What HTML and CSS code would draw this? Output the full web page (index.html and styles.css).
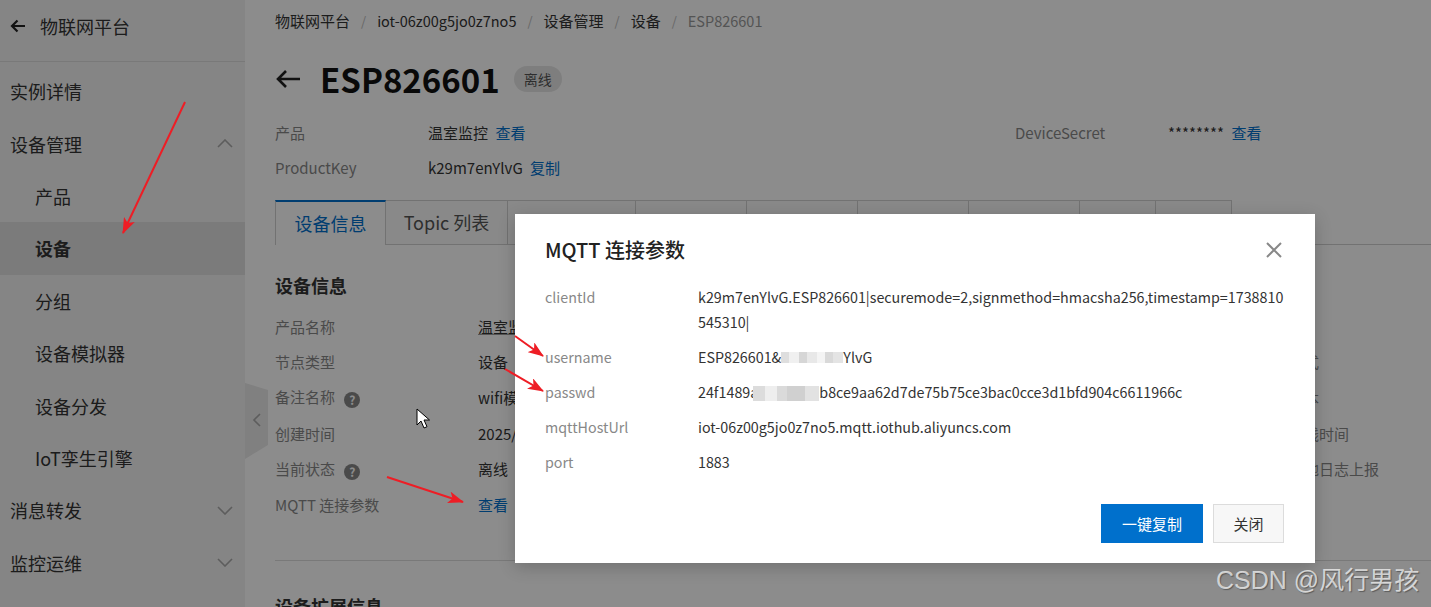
FILE: index.html
```html
<!DOCTYPE html>
<html>
<head>
    <meta charset="utf-8">
    <title>ESP826601 - 设备</title>
    <link rel="stylesheet" href="styles.css">
</head>
<body>
    <div class="page">
        <aside class="sidebar">
            <div class="side-head">
                <svg class="back-icon" width="16" height="14" viewBox="0 0 16 14"><path d="M15 7H2M7.5 1.5L2 7l5.5 5.5" fill="none" stroke="#222" stroke-width="2.2"/></svg>
                <span>物联网平台</span>
            </div>
            <ul class="menu">
                <li>实例详情</li>
                <li>设备管理 <svg class="chev" width="16" height="9" viewBox="0 0 16 9"><path d="M1 8l7-7 7 7" fill="none" stroke="#aaa" stroke-width="1.6"/></svg></li>
                <li class="sub">产品</li>
                <li class="sub active">设备</li>
                <li class="sub">分组</li>
                <li class="sub">设备模拟器</li>
                <li class="sub">设备分发</li>
                <li class="sub">IoT孪生引擎</li>
                <li>消息转发 <svg class="chev" width="16" height="9" viewBox="0 0 16 9"><path d="M1 1l7 7 7-7" fill="none" stroke="#aaa" stroke-width="1.6"/></svg></li>
                <li>监控运维 <svg class="chev" width="16" height="9" viewBox="0 0 16 9"><path d="M1 1l7 7 7-7" fill="none" stroke="#aaa" stroke-width="1.6"/></svg></li>
            </ul>
        </aside>

        <main class="main">
            <svg class="handle" width="26" height="82" viewBox="0 0 26 82"><polygon points="1,3 24,10 24,65 1,79" fill="#e9e9e9"/><path d="M16 34l-6 6 6 6" fill="none" stroke="#aaa" stroke-width="1.6"/></svg>

            <div class="crumbs">
                <span class="cn">物联网平台</span><i>/</i>
                <span>iot-06z00g5jo0z7no5</span><i>/</i>
                <span class="cn">设备管理</span><i>/</i>
                <span class="cn">设备</span><i>/</i>
                <span class="current">ESP826601</span>
            </div>

            <div class="title-row">
                <svg width="26" height="20" viewBox="0 0 26 20"><path d="M25 10H3M11 2L3 10l8 8" fill="none" stroke="#222" stroke-width="2.6"/></svg>
                <h1>ESP826601</h1>
                <span class="badge">离线</span>
            </div>

            <div class="meta">
                <span class="label">产品</span>
                <span class="value">温室监控 <a>查看</a></span>
                <span></span><span></span>
                <span class="label">DeviceSecret</span>
                <span class="value">******** <a>查看</a></span>
                <span class="label">ProductKey</span>
                <span class="value">k29m7enYlvG <a>复制</a></span>
            </div>

            <div class="tabs">
                <div class="tab active">设备信息</div>
                <div class="tab w122">Topic 列表</div>
                <div class="tab w128">物模型数据</div>
                <div class="tab">设备影子</div>
                <div class="tab">文件管理</div>
                <div class="tab">日志服务</div>
                <div class="tab">在线调试</div>
                <div class="tab w76">分组</div>
                <div class="tab w76">任务</div>
            </div>

            <h3 class="section-title">设备信息</h3>
            <div class="info">
                <span class="label">产品名称</span><span class="value"><u>温室监控</u></span>
                <span></span><span></span>
                <span class="label">IP地址</span><span></span>

                <span class="label">节点类型</span><span class="value">设备</span>
                <span></span><span></span>
                <span class="label">认证方式</span><span></span>

                <span class="label">备注名称 <b class="help">?</b></span><span class="value">wifi模块</span>
                <span></span><span></span>
                <span class="label">固件版本</span><span></span>

                <span class="label">创建时间</span><span class="value">2025/02/06 10:52:11</span>
                <span></span><span></span>
                <span class="label">最后上线时间</span><span></span>

                <span class="label">当前状态 <b class="help">?</b></span><span class="value">离线</span>
                <span></span><span></span>
                <span class="label">设备本地日志上报</span><span></span>

                <span class="label">MQTT 连接参数</span><span class="value"><a>查看</a></span>
            </div>

            <div class="divider"></div>
            <h3 class="section-title next">设备扩展信息</h3>
        </main>
    </div>

    <div class="mask"></div>

    <div class="dialog">
        <h2>MQTT 连接参数</h2>
        <svg class="close" width="16" height="16" viewBox="0 0 16 16"><path d="M1 1l14 14M15 1L1 15" stroke="#888" stroke-width="2"/></svg>
        <div class="params">
            <span class="key">clientId</span>
            <span class="val">k29m7enYlvG.ESP826601|securemode=2,signmethod=hmacsha256,timestamp=1738810<br>545310|</span>
            <span class="key">username</span>
            <span class="val">ESP826601&amp;<span class="mosaic user"></span>YlvG</span>
            <span class="key">passwd</span>
            <span class="val">24f1489a<span class="mosaic pass"></span>b8ce9aa62d7de75b75ce3bac0cce3d1bfd904c6611966c</span>
            <span class="key">mqttHostUrl</span>
            <span class="val">iot-06z00g5jo0z7no5.mqtt.iothub.aliyuncs.com</span>
            <span class="key">port</span>
            <span class="val">1883</span>
        </div>
        <div class="actions">
            <button class="btn primary">一键复制</button>
            <button class="btn">关闭</button>
        </div>
    </div>

    <!-- red annotation arrows drawn over the screenshot -->
    <svg class="marks" width="1431" height="607" viewBox="0 0 1431 607">
        <defs>
            <marker id="head" viewBox="0 0 16 12" refX="15" refY="6" markerWidth="16" markerHeight="12" markerUnits="userSpaceOnUse" orient="auto">
                <path d="M0 0L16 6 0 12 4 6z" fill="#ee1d25"/>
            </marker>
        </defs>
        <g stroke="#ee1d25" stroke-width="2" fill="none" marker-end="url(#head)">
            <line x1="185" y1="102" x2="123" y2="233"/>
            <line x1="515" y1="336" x2="543" y2="356"/>
            <line x1="505" y1="369" x2="543" y2="391"/>
            <line x1="387" y1="477" x2="463" y2="502"/>
        </g>
    </svg>

    <svg class="cursor" width="14" height="22" viewBox="0 0 14 22"><path d="M1 1v16l4-4 3 7 3-1.3-3-6.7h5.5z" fill="#fff" stroke="#000" stroke-width="1"/></svg>

    <div class="watermark">CSDN @风行男孩</div>
</body>
</html>
```

FILE: styles.css
```css
body {
    margin: 0;
    width: 1431px;
    height: 607px;
    overflow: hidden;
    position: relative;
    font-family: "Noto Sans CJK SC", sans-serif;
    color: #333;
    background-color: white;
}

a {
    color: #0070cc;
    cursor: pointer;
}

.page {
    display: flex;
    height: 607px;
}

/* left menu */
.sidebar {
    width: 245px;
    flex: none;
    background-color: #f2f2f2;
}

.side-head {
    height: 62px;
    box-sizing: border-box;
    display: flex;
    align-items: center;
    gap: 14px;
    padding: 0 0 10px 10px;
    font-size: 18px;
    border-bottom: 1px solid #dcdcdc;
}

.menu {
    list-style: none;
    margin: 0;
    padding: 3px 0 0;
}

.menu li {
    height: 52.4px;
    display: flex;
    align-items: center;
    justify-content: space-between;
    padding: 0 12px 0 10px;
    font-size: 18px;
    color: #333;
}

.menu li.sub {
    padding-left: 35px;
}

.menu li.active {
    background-color: #e0e0e0;
    font-weight: bold;
}

/* main area */
.main {
    flex: 1;
    min-width: 0;
    padding-left: 30px;
    position: relative;
}

.handle {
    position: absolute;
    left: -1px;
    top: 380px;
}

.crumbs {
    padding-top: 11px;
    line-height: 20px;
    font-size: 14.5px;
    display: flex;
    white-space: nowrap;
}

.crumbs .cn {
    font-size: 15px;
}

.crumbs i {
    font-style: normal;
    color: #bbb;
    margin: 0 11px;
    font-size: 13px;
}

.crumbs .current {
    color: #999;
}

.title-row {
    display: flex;
    align-items: center;
    height: 40px;
    margin-top: 28px;
}

.title-row h1 {
    margin: 0 14px 0 19px;
    font-size: 33px;
    line-height: 40px;
    font-weight: bold;
    color: #111;
}

.badge {
    height: 26px;
    line-height: 26px;
    padding: 0 10px;
    border-radius: 13px;
    background-color: #e6e6e6;
    font-size: 14px;
    color: #555;
}

.meta {
    display: grid;
    grid-template-columns: 153px 217px 153px 217px 153px 217px;
    grid-auto-rows: 35px;
    align-items: center;
    margin-top: 15.5px;
    font-size: 15px;
    white-space: nowrap;
}

.label {
    color: #888;
}

.meta a {
    margin-left: 4px;
}

.tabs {
    display: flex;
    margin-top: 15px;
    height: 44px;
    border-bottom: 1px solid #cfcfcf;
}

.tab {
    width: 111px;
    height: 44px;
    line-height: 43px;
    text-align: center;
    font-size: 18px;
    color: #555;
    background-color: #fafafa;
    border-top: 1px solid #cfcfcf;
    border-right: 1px solid #cfcfcf;
    box-sizing: border-box;
    white-space: nowrap;
}

.tab.w122 {
    width: 122px;
}

.tab.w128 {
    width: 128px;
}

.tab.w76 {
    width: 76px;
}

.tab.active {
    height: 45px;
    color: #0070cc;
    background-color: white;
    border-top: 2px solid #0070cc;
    border-left: 1px solid #cfcfcf;
}

.section-title {
    margin: 28px 0 0;
    font-size: 18px;
    line-height: 24px;
    font-weight: bold;
}

.section-title.next {
    margin-top: 33px;
}

.info {
    display: grid;
    grid-template-columns: 203px 289px 203px 289px 203px 289px;
    grid-auto-rows: 35.6px;
    align-items: center;
    margin-top: 12px;
    font-size: 15px;
    white-space: nowrap;
}

.info u {
    text-decoration-color: #999;
}

.help {
    display: inline-flex;
    width: 16px;
    height: 16px;
    border-radius: 50%;
    background-color: #888;
    color: white;
    font-size: 12px;
    line-height: 16px;
    align-items: center;
    justify-content: center;
    margin-left: 6px;
    vertical-align: -2px;
}

.divider {
    margin-top: 38.4px;
    border-top: 1px solid #dcdcdc;
}

/* overlay + dialog */
.mask {
    position: absolute;
    inset: 0;
    background-color: rgba(0, 0, 0, 0.45);
}

.dialog {
    position: absolute;
    left: 515px;
    top: 214px;
    width: 800px;
    height: 349px;
    box-sizing: border-box;
    padding: 24px 30px 20px;
    background-color: white;
    box-shadow: 0 4px 16px rgba(0, 0, 0, 0.2);
    display: flex;
    flex-direction: column;
}

.dialog h2 {
    margin: 0;
    font-size: 20px;
    line-height: 24px;
    font-weight: 500;
    color: #222;
}

.close {
    position: absolute;
    right: 33px;
    top: 28px;
}

.params {
    display: grid;
    grid-template-columns: 153px 1fr;
    row-gap: 10px;
    margin-top: 21.5px;
    font-size: 14.3px;
    line-height: 25px;
}

.key {
    color: #888;
}

.val {
    color: #333;
    white-space: nowrap;
}

.mosaic {
    display: inline-block;
    vertical-align: middle;
}

.mosaic.user {
    width: 62px;
    height: 11px;
    margin-top: -2px;
    background: linear-gradient(90deg, #dedede 0 8px, #f0f0f0 8px 18px, #d6d6d6 18px 26px, #e8e8e8 26px 36px, #f4f4f4 36px 44px, #d9d9d9 44px 52px, #e4e4e4 52px 62px);
}

.mosaic.pass {
    width: 66px;
    height: 15px;
    margin-left: -5px;
    background: linear-gradient(90deg, #dcdcdc 0 12px, #eeeeee 12px 24px, #dadada 24px 34px, #d0d0d0 34px 52px, #e2e2e2 52px 66px);
}

.actions {
    margin-top: auto;
    display: flex;
    justify-content: flex-end;
    gap: 10px;
    padding-right: 1px;
}

.btn {
    height: 39px;
    width: 71px;
    font-family: "Noto Sans CJK SC", sans-serif;
    font-size: 15px;
    color: #333;
    background-color: #f7f7f7;
    border: 1px solid #dcdcdc;
    cursor: pointer;
}

.btn.primary {
    width: 102px;
    color: white;
    background-color: #0070cc;
    border: none;
}

/* things drawn on top of the screenshot */
.marks {
    position: absolute;
    left: 0;
    top: 0;
    pointer-events: none;
}

.cursor {
    position: absolute;
    left: 416px;
    top: 408px;
}

.watermark {
    position: absolute;
    left: 1216px;
    top: 564px;
    font-family: "Liberation Sans", "Noto Sans CJK SC", sans-serif;
    font-size: 25px;
    line-height: 32px;
    color: rgba(255, 255, 255, 0.7);
    text-shadow: 1px 1px 1px rgba(0, 0, 0, 0.35);
    white-space: nowrap;
}
```
